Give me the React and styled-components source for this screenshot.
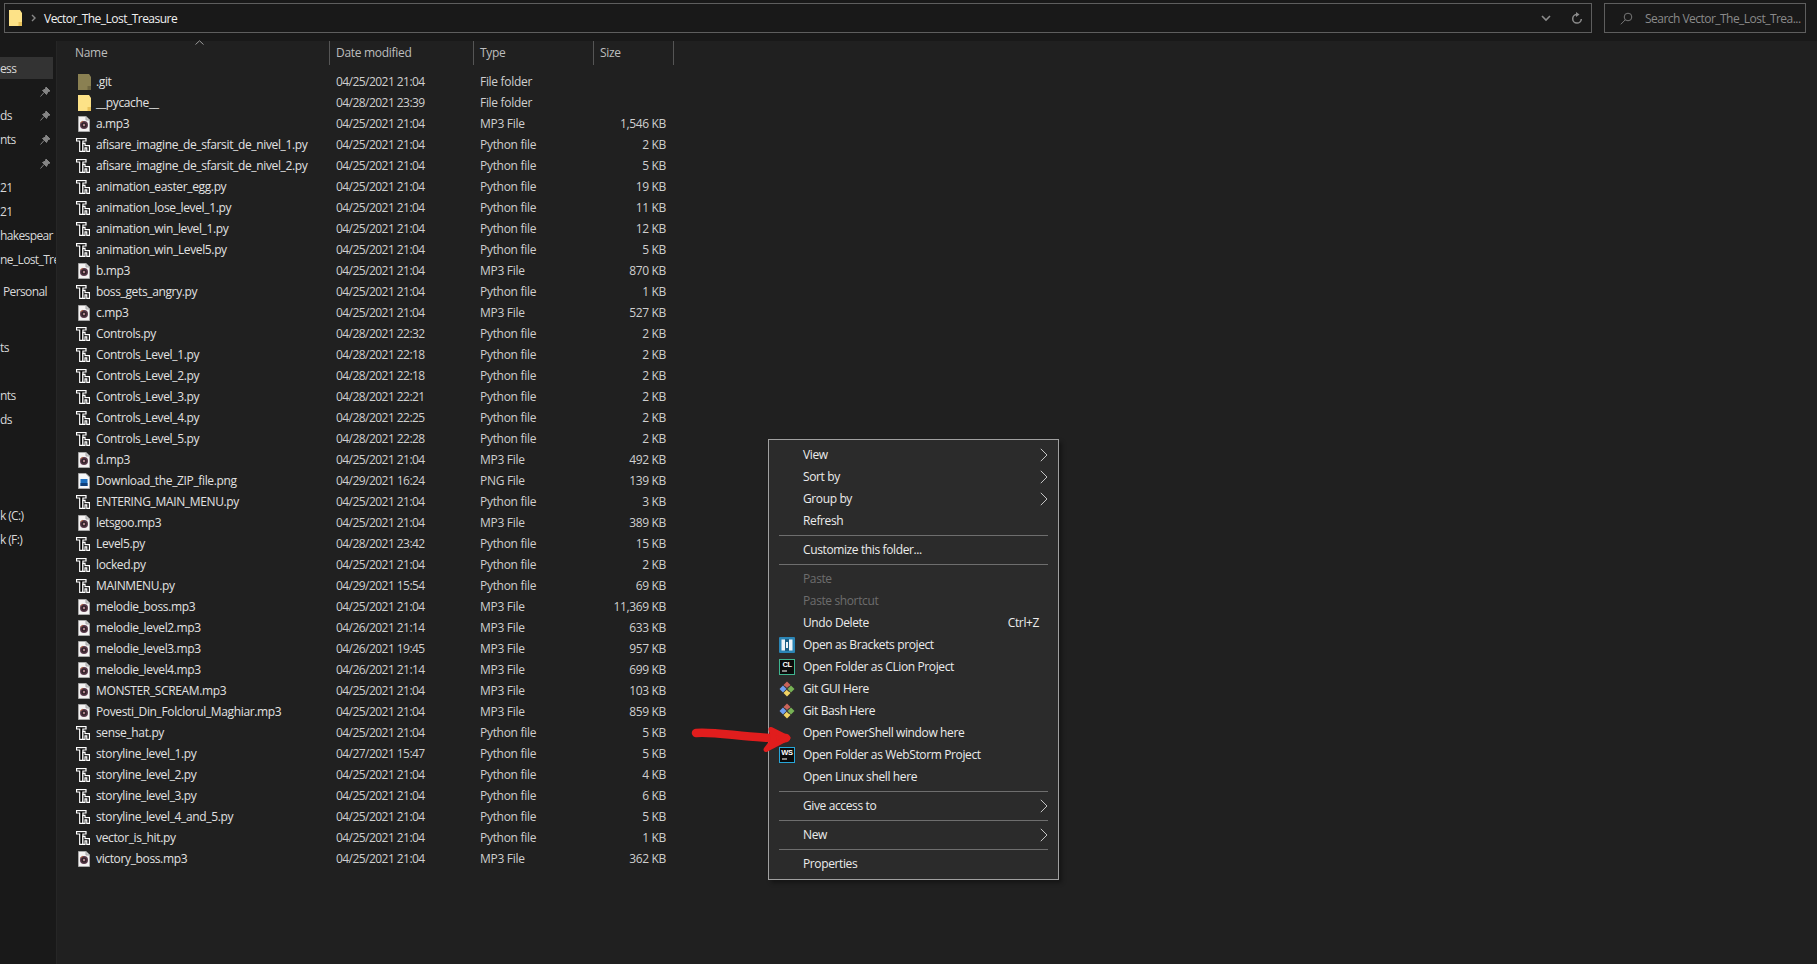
import React from "react";
import styled, { createGlobalStyle } from "styled-components";

const Global = createGlobalStyle`
  html, body { margin: 0; padding: 0; background: #202020; }
  body { font-family: "Open Sans", "Noto Sans", sans-serif; font-size: 12px; color: #e6e6e6; overflow: hidden; }
`;

const Win = styled.div`
  position: relative;
  width: 1817px;
  height: 964px;
  display: flex;
  flex-direction: column;
  overflow: hidden;
  background: #202020;
`;
const Toolbar = styled.div`
  height: 41px;
  flex: none;
  display: flex;
  gap: 12px;
  padding: 3px 11px 8px 4px;
  box-sizing: border-box;
  background: #191919;
`;
const AddressBar = styled.div`
  flex: 1;
  min-width: 0;
  display: flex;
  align-items: center;
  border: 1px solid #5e5e5e;
  background: #191919;
  padding-left: 4px;
`;
const Crumb = styled.span`
  margin-left: 7px;
  color: #f0f0f0;
  font-size: 12px;
  letter-spacing: -0.52px;
`;
const AddressActions = styled.div`
  margin-left: auto;
  display: flex;
  align-items: center;
  gap: 20px;
  padding-right: 8px;
`;
const SearchBox = styled.div`
  width: 202px;
  flex: none;
  box-sizing: border-box;
  display: flex;
  align-items: center;
  border: 1px solid #5e5e5e;
  padding-left: 15px;
  color: #8a8a8a;
  font-size: 12px;
  letter-spacing: -0.53px;
  gap: 12px;
  white-space: nowrap;
  overflow: hidden;
`;
const Body = styled.div`
  flex: 1;
  display: flex;
  min-height: 0;
`;
const Sidebar = styled.nav`
  width: 57px;
  flex: none;
  background: #191919;
  border-right: 1px solid #262626;
  box-sizing: border-box;
  padding-top: 16px;
  overflow: hidden;
`;
const NavRow = styled.div`
  width: 53px;
  height: ${(p) => p.$h || 24}px;
  display: flex;
  align-items: center;
  position: relative;
  white-space: nowrap;
  color: #d8d8d8;
  letter-spacing: -0.62px;
  padding-left: ${(p) => p.$indent || 0}px;
  box-sizing: border-box;
  background: ${(p) => (p.$active ? "#333333" : "transparent")};
`;
const Pin = styled.span`
  position: absolute;
  right: 2px;
  top: 7px;
  line-height: 0;
`;
const NavGap = styled.div`
  height: ${(p) => p.$h}px;
`;
const Content = styled.main`
  flex: 1;
  min-width: 0;
  padding-left: 18px;
`;
const Row = styled.div`
  display: grid;
  grid-template-columns: 255px 144px 120px 80px;
  height: 21px;
  align-items: center;
  white-space: nowrap;
  font-size: 12px;
  letter-spacing: -0.36px;
  color: #e2e2e2;
`;
const HeadRow = styled(Row)`
  height: 24px;
  margin-bottom: 6px;
  color: #bdbdbd;
  position: relative;
  letter-spacing: -0.3px;
`;
const HeadCell = styled.div`
  height: 24px;
  display: flex;
  align-items: center;
  padding-left: ${(p) => (p.$first ? "0" : "6px")};
  padding-bottom: 2px;
  border-right: 1px solid #555;
  box-sizing: border-box;
`;
const SortCaret = styled.span`
  position: absolute;
  left: 120px;
  top: -1px;
  line-height: 0;
`;
const NameCell = styled.div`
  display: flex;
  align-items: center;
  gap: 5px;
  margin-left: 2px;
`;
const IconSlot = styled.span`
  width: 14px;
  height: 16px;
  display: inline-flex;
  align-items: center;
  justify-content: center;
  flex: none;
`;
const Cell = styled.div`
  padding-left: 6px;
  color: #cfcfcf;
  letter-spacing: ${(p) => p.$ls || "-0.3px"};
`;
const SizeCell = styled.div`
  text-align: right;
  padding-right: 8px;
  color: #cfcfcf;
  letter-spacing: -0.35px;
`;
const Menu = styled.div`
  position: absolute;
  left: 768px;
  top: 439px;
  width: 291px;
  height: 441px;
  box-sizing: border-box;
  background: #2b2b2b;
  border: 1px solid #a0a0a0;
  padding: 4px 10px 3px;
  box-shadow: 3px 3px 4px rgba(0, 0, 0, 0.35);
  letter-spacing: -0.38px;
`;
const MenuItem = styled.div`
  height: 22px;
  display: flex;
  align-items: center;
  color: ${(p) => (p.$disabled ? "#6d6d6d" : "#ececec")};
`;
const MenuIcon = styled.span`
  width: 24px;
  height: 16px;
  flex: none;
  display: inline-flex;
  align-items: center;
`;
const MenuLabel = styled.span`
  padding-bottom: 2px;
`;
const Shortcut = styled.span`
  margin-left: auto;
  margin-right: 9px;
  padding-bottom: 2px;
`;
const Chevron = styled.span`
  margin-left: auto;
  line-height: 0;
`;
const Sep = styled.div`
  height: 1px;
  background: #6e6e6e;
  margin: 3px 0;
`;
const RedArrow = styled.svg`
  position: absolute;
  left: 685px;
  top: 720px;
`;

const FolderIcon = ({ dim }) => (
  <svg width="13" height="16" viewBox="0 0 13 16" style={{ flex: "none" }}>
    <path d="M0 0H11L13 3V16H0Z" fill={dim ? "#8a8052" : "#fde287"} />
    <path d="M9.5 12H13V16H9.5Z" fill={dim ? "#6f6640" : "#e9c25a"} />
  </svg>
);
const PyIcon = () => (
  <svg width="14" height="14" viewBox="0 0 14 14" style={{ marginLeft: -3 }}>
    <path d="M0.6 0.6H10V3H6.9V13.4H3.7V3H0.6Z" fill="#000" stroke="#fff" strokeWidth="1.2" />
    <path d="M6.9 5.4H9V7.6H13.4V13.4H10.8V9.8H9V13.4H6.9Z" fill="#000" stroke="#fff" strokeWidth="1.2" />
  </svg>
);
const Mp3Icon = () => (
  <svg width="12" height="16" viewBox="0 0 12 16">
    <path d="M0.5 0.5H8L11.5 4V15.5H0.5Z" fill="#f4f2f2" stroke="#a8a8a8" />
    <path d="M8 0.5V4H11.5" fill="#cfcfcf" stroke="#a8a8a8" />
    <circle cx="6" cy="9" r="4" fill="#5b3a4c" />
    <circle cx="6" cy="9" r="2.6" fill="#2d2024" />
    <circle cx="6" cy="9" r="1.2" fill="#b0848f" />
    <path d="M2.6 7 A4 4 0 0 1 5 5.2" stroke="#b0623c" fill="none" strokeWidth="1" />
  </svg>
);
const PngIcon = () => (
  <svg width="12" height="16" viewBox="0 0 12 16">
    <path d="M0.5 0.5H8L11.5 4V15.5H0.5Z" fill="#f4f6f8" stroke="#a8a8a8" />
    <rect x="2.5" y="6" width="7" height="7" fill="#1b6fc0" />
    <rect x="2.5" y="10" width="7" height="3" fill="#0e3f7a" />
  </svg>
);
const ICONS = { d: <FolderIcon dim />, f: <FolderIcon />, m: <Mp3Icon />, p: <PyIcon />, g: <PngIcon /> };

const BracketsIcon = () => (
  <svg width="16" height="16" viewBox="0 0 16 16">
    <rect width="16" height="16" rx="1" fill="#2b85b5" />
    <rect x="2.5" y="2.5" width="11" height="11" fill="#eef4f8" />
    <rect x="6" y="2" width="4" height="12" fill="#1c5f85" />
    <rect x="7" y="5" width="2" height="6" fill="#eef4f8" />
  </svg>
);
const JetIcon = ({ color, label }) => (
  <svg width="16" height="16" viewBox="0 0 16 16">
    <rect x="0.5" y="0.5" width="15" height="15" fill="#0a0a0a" stroke={color} />
    <text x="8" y="8" fontFamily="Liberation Sans" fontSize="7.5" fontWeight="700" fill="#fff" textAnchor="middle">{label}</text>
    <rect x="3" y="11.5" width="5" height="1" fill="#fff" />
  </svg>
);
const GitIcon = () => (
  <svg width="16" height="16" viewBox="0 0 16 16">
    <path d="M8 0.5L11.5 4L8 7.5L4.5 4Z" fill="#c9645a" />
    <path d="M4 4.5L7.5 8L4 11.5L0.5 8Z" fill="#6f9ff0" />
    <path d="M12 4.5L15.5 8L12 11.5L8.5 8Z" fill="#77b255" />
    <path d="M8 8.5L11.5 12L8 15.5L4.5 12Z" fill="#f0d264" />
    <path d="M6.5 5.5L9.5 10.5M9.5 5.5L8 8" stroke="#444" strokeWidth="1" fill="none" />
  </svg>
);

const MenuChevron = () => (
  <svg width="8" height="14" viewBox="0 0 8 14">
    <path d="M0.8 0.8L7 7L0.8 13.2" fill="none" stroke="#c4c4c4" strokeWidth="1" />
  </svg>
);

const FILES = [
  ["d", ".git", "04/25/2021 21:04", "File folder", ""],
  ["f", "__pycache__", "04/28/2021 23:39", "File folder", ""],
  ["m", "a.mp3", "04/25/2021 21:04", "MP3 File", "1,546 KB"],
  ["p", "afisare_imagine_de_sfarsit_de_nivel_1.py", "04/25/2021 21:04", "Python file", "2 KB"],
  ["p", "afisare_imagine_de_sfarsit_de_nivel_2.py", "04/25/2021 21:04", "Python file", "5 KB"],
  ["p", "animation_easter_egg.py", "04/25/2021 21:04", "Python file", "19 KB"],
  ["p", "animation_lose_level_1.py", "04/25/2021 21:04", "Python file", "11 KB"],
  ["p", "animation_win_level_1.py", "04/25/2021 21:04", "Python file", "12 KB"],
  ["p", "animation_win_Level5.py", "04/25/2021 21:04", "Python file", "5 KB"],
  ["m", "b.mp3", "04/25/2021 21:04", "MP3 File", "870 KB"],
  ["p", "boss_gets_angry.py", "04/25/2021 21:04", "Python file", "1 KB"],
  ["m", "c.mp3", "04/25/2021 21:04", "MP3 File", "527 KB"],
  ["p", "Controls.py", "04/28/2021 22:32", "Python file", "2 KB"],
  ["p", "Controls_Level_1.py", "04/28/2021 22:18", "Python file", "2 KB"],
  ["p", "Controls_Level_2.py", "04/28/2021 22:18", "Python file", "2 KB"],
  ["p", "Controls_Level_3.py", "04/28/2021 22:21", "Python file", "2 KB"],
  ["p", "Controls_Level_4.py", "04/28/2021 22:25", "Python file", "2 KB"],
  ["p", "Controls_Level_5.py", "04/28/2021 22:28", "Python file", "2 KB"],
  ["m", "d.mp3", "04/25/2021 21:04", "MP3 File", "492 KB"],
  ["g", "Download_the_ZIP_file.png", "04/29/2021 16:24", "PNG File", "139 KB"],
  ["p", "ENTERING_MAIN_MENU.py", "04/25/2021 21:04", "Python file", "3 KB"],
  ["m", "letsgoo.mp3", "04/25/2021 21:04", "MP3 File", "389 KB"],
  ["p", "Level5.py", "04/28/2021 23:42", "Python file", "15 KB"],
  ["p", "locked.py", "04/25/2021 21:04", "Python file", "2 KB"],
  ["p", "MAINMENU.py", "04/29/2021 15:54", "Python file", "69 KB"],
  ["m", "melodie_boss.mp3", "04/25/2021 21:04", "MP3 File", "11,369 KB"],
  ["m", "melodie_level2.mp3", "04/26/2021 21:14", "MP3 File", "633 KB"],
  ["m", "melodie_level3.mp3", "04/26/2021 19:45", "MP3 File", "957 KB"],
  ["m", "melodie_level4.mp3", "04/26/2021 21:14", "MP3 File", "699 KB"],
  ["m", "MONSTER_SCREAM.mp3", "04/25/2021 21:04", "MP3 File", "103 KB"],
  ["m", "Povesti_Din_Folclorul_Maghiar.mp3", "04/25/2021 21:04", "MP3 File", "859 KB"],
  ["p", "sense_hat.py", "04/25/2021 21:04", "Python file", "5 KB"],
  ["p", "storyline_level_1.py", "04/27/2021 15:47", "Python file", "5 KB"],
  ["p", "storyline_level_2.py", "04/25/2021 21:04", "Python file", "4 KB"],
  ["p", "storyline_level_3.py", "04/25/2021 21:04", "Python file", "6 KB"],
  ["p", "storyline_level_4_and_5.py", "04/25/2021 21:04", "Python file", "5 KB"],
  ["p", "vector_is_hit.py", "04/25/2021 21:04", "Python file", "1 KB"],
  ["m", "victory_boss.mp3", "04/25/2021 21:04", "MP3 File", "362 KB"],
];

const PinIcon = () => (
  <svg width="12" height="14" viewBox="0 0 12 14">
    <path d="M7 1L11 5L9 5.5L7.5 8.5L3.5 4.5L6.5 3Z M5 6.5L1.5 10.5" fill="#858585" stroke="#858585" strokeWidth="1" />
  </svg>
);

const NAV = [
  { t: "ess", active: true, h: 22 },
  { t: "", pin: true },
  { t: "ds", pin: true },
  { t: "nts", pin: true },
  { t: "", pin: true },
  { t: "21" },
  { t: "21" },
  { t: "hakespear" },
  { t: "ne_Lost_Tre" },
  { gap: 8 },
  { t: "Personal", indent: 3 },
  { gap: 32 },
  { t: "ts" },
  { gap: 24 },
  { t: "nts" },
  { t: "ds" },
  { gap: 72 },
  { t: "k (C:)" },
  { t: "k (F:)" },
];

const MENU = [
  { t: "View", arrow: true }, { t: "Sort by", arrow: true }, { t: "Group by", arrow: true }, { t: "Refresh" },
  { sep: true }, { t: "Customize this folder..." },
  { sep: true }, { t: "Paste", disabled: true }, { t: "Paste shortcut", disabled: true },
  { t: "Undo Delete", shortcut: "Ctrl+Z" },
  { t: "Open as Brackets project", icon: <BracketsIcon /> },
  { t: "Open Folder as CLion Project", icon: <JetIcon color="#3fb58f" label="CL" /> },
  { t: "Git GUI Here", icon: <GitIcon /> },
  { t: "Git Bash Here", icon: <GitIcon /> },
  { t: "Open PowerShell window here" },
  { t: "Open Folder as WebStorm Project", icon: <JetIcon color="#27a6d8" label="WS" /> },
  { t: "Open Linux shell here" },
  { sep: true }, { t: "Give access to", arrow: true },
  { sep: true }, { t: "New", arrow: true },
  { sep: true }, { t: "Properties" },
];

export default function App() {
  return (
    <Win>
      <Global />
      <Toolbar>
        <AddressBar>
          <FolderIcon />
          <svg width="6" height="8" viewBox="0 0 6 8" style={{ marginLeft: 9 }}>
            <path d="M1 1L4 4L1 7" fill="none" stroke="#888" strokeWidth="1.4" />
          </svg>
          <Crumb>Vector_The_Lost_Treasure</Crumb>
          <AddressActions>
            <svg width="10" height="7" viewBox="0 0 10 7">
              <path d="M1 1L5 5L9 1" fill="none" stroke="#8c8c8c" strokeWidth="1.6" />
            </svg>
            <svg width="12" height="13" viewBox="0 0 12 13">
              <path d="M6 2.5A4.3 4.3 0 1 0 10.3 7" fill="none" stroke="#8c8c8c" strokeWidth="1.5" />
              <path d="M5 0L8.5 2.5L5 5Z" fill="#8c8c8c" />
            </svg>
          </AddressActions>
        </AddressBar>
        <SearchBox>
          <svg width="13" height="13" viewBox="0 0 13 13" style={{ flex: "none" }}>
            <circle cx="8" cy="5" r="3.8" fill="none" stroke="#777" strokeWidth="1" />
            <path d="M5.3 7.8L0.8 12.3" stroke="#777" strokeWidth="1" />
          </svg>
          <span>Search Vector_The_Lost_Trea...</span>
        </SearchBox>
      </Toolbar>
      <Body>
        <Sidebar>
          {NAV.map((n, i) =>
            n.gap ? (
              <NavGap key={i} $h={n.gap} />
            ) : (
              <NavRow key={i} $active={n.active} $h={n.h} $indent={n.indent}>
                {n.t}
                {n.pin && <Pin><PinIcon /></Pin>}
              </NavRow>
            )
          )}
        </Sidebar>
        <Content>
          <HeadRow>
            <SortCaret>
              <svg width="9" height="5" viewBox="0 0 9 5"><path d="M0.5 4.5L4.5 0.8L8.5 4.5" fill="none" stroke="#999" /></svg>
            </SortCaret>
            <HeadCell $first>Name</HeadCell>
            <HeadCell>Date modified</HeadCell>
            <HeadCell>Type</HeadCell>
            <HeadCell>Size</HeadCell>
          </HeadRow>
          {FILES.map(([k, name, date, type, size]) => (
            <Row key={name}>
              <NameCell>
                <IconSlot>{ICONS[k]}</IconSlot>
                {name}
              </NameCell>
              <Cell $ls="-0.55px">{date}</Cell>
              <Cell>{type}</Cell>
              <SizeCell>{size}</SizeCell>
            </Row>
          ))}
        </Content>
      </Body>
      <Menu>
        {MENU.map((m, i) =>
          m.sep ? (
            <Sep key={i} />
          ) : (
            <MenuItem key={i} $disabled={m.disabled}>
              <MenuIcon>{m.icon}</MenuIcon>
              <MenuLabel>{m.t}</MenuLabel>
              {m.shortcut && <Shortcut>{m.shortcut}</Shortcut>}
              {m.arrow && <Chevron><MenuChevron /></Chevron>}
            </MenuItem>
          )
        )}
      </Menu>
      <RedArrow width="112" height="40" viewBox="0 0 112 40">
        <path
          d="M11 13C28 11.5 50 16 78 17.5C88 18 96 19 101 18"
          fill="none"
          stroke="#e11d1d"
          strokeWidth="8.5"
          strokeLinecap="round"
          strokeLinejoin="round"
        />
        <path
          d="M86 9.5L103 18L81 29.5L89 19Z"
          fill="#e11d1d"
          stroke="#e11d1d"
          strokeWidth="5"
          strokeLinejoin="round"
        />
      </RedArrow>
    </Win>
  );
}
